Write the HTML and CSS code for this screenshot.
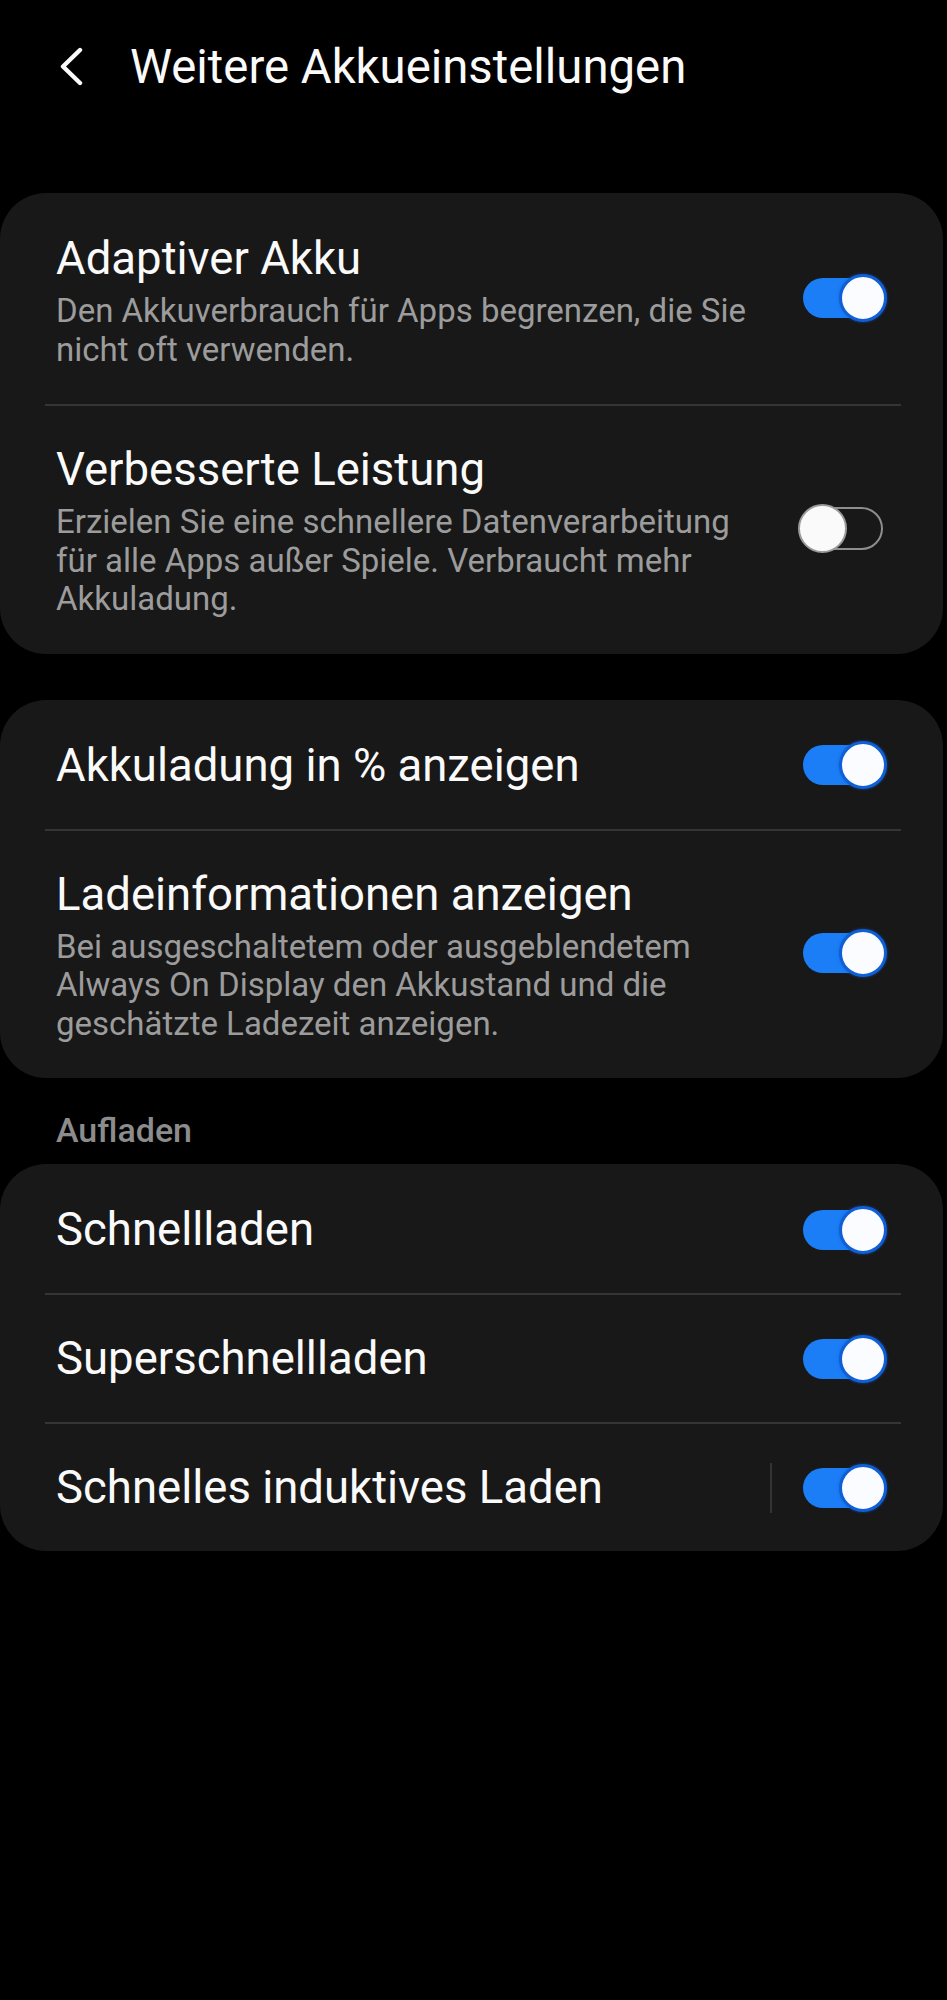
FILE: index.html
```html
<!DOCTYPE html>
<html lang="de">
<head>
<meta charset="utf-8">
<title>Weitere Akkueinstellungen</title>
<link rel="stylesheet" href="styles.css">
</head>
<body>
<header class="topbar">
  <svg class="back" viewBox="0 0 30 40" width="30" height="40" aria-hidden="true">
    <polyline points="24,4 7,20.5 24,37" fill="none" stroke="#fafafa" stroke-width="4.4" stroke-linecap="round" stroke-linejoin="round"/>
  </svg>
  <h1 class="title">Weitere Akkueinstellungen</h1>
</header>

<section class="card first">
  <div class="row multi">
    <div class="text">
      <div class="label">Adaptiver Akku</div>
      <div class="sub">Den Akkuverbrauch für Apps begrenzen, die Sie<br>nicht oft verwenden.</div>
    </div>
    <div class="toggle on"><span class="track"></span><span class="thumb"></span></div>
  </div>
  <div class="row multi">
    <div class="text">
      <div class="label">Verbesserte Leistung</div>
      <div class="sub">Erzielen Sie eine schnellere Datenverarbeitung<br>für alle Apps außer Spiele. Verbraucht mehr<br>Akkuladung.</div>
    </div>
    <div class="toggle off"><span class="track"></span><span class="thumb"></span></div>
  </div>
</section>

<section class="card">
  <div class="row">
    <div class="text">
      <div class="label">Akkuladung in % anzeigen</div>
    </div>
    <div class="toggle on"><span class="track"></span><span class="thumb"></span></div>
  </div>
  <div class="row multi">
    <div class="text">
      <div class="label">Ladeinformationen anzeigen</div>
      <div class="sub">Bei ausgeschaltetem oder ausgeblendetem<br>Always On Display den Akkustand und die<br>geschätzte Ladezeit anzeigen.</div>
    </div>
    <div class="toggle on"><span class="track"></span><span class="thumb"></span></div>
  </div>
</section>

<h2 class="section-title">Aufladen</h2>

<section class="card">
  <div class="row">
    <div class="text">
      <div class="label">Schnellladen</div>
    </div>
    <div class="toggle on"><span class="track"></span><span class="thumb"></span></div>
  </div>
  <div class="row">
    <div class="text">
      <div class="label">Superschnellladen</div>
    </div>
    <div class="toggle on"><span class="track"></span><span class="thumb"></span></div>
  </div>
  <div class="row">
    <div class="text">
      <div class="label">Schnelles induktives Laden</div>
    </div>
    <span class="vsep"></span>
    <div class="toggle on"><span class="track"></span><span class="thumb"></span></div>
  </div>
</section>
</body>
</html>
```

FILE: styles.css
```css
html, body {
  margin: 0;
  padding: 0;
  background: #000;
}

body {
  width: 947px;
  min-height: 2000px;
  font-family: Roboto, "Noto Sans", "Liberation Sans", sans-serif;
  color: #fafafa;
}

.topbar {
  display: flex;
  align-items: center;
  padding: 39px 0 0 56px;
  height: 56px;
}

.back {
  display: block;
  flex: none;
  margin-top: -2px;
}

.title {
  margin: 0 0 0 44px;
  font-size: 47.3px;
  font-weight: 400;
  line-height: 56px;
  white-space: nowrap;
}

.card {
  margin: 46px 4px 0 0;
  padding: 0 42px 0 45px;
  background: #181818;
  border-radius: 46px;
}

.card.first {
  margin-top: 98px;
}

.section-title + .card {
  margin-top: 0;
}

.row {
  display: flex;
  align-items: center;
  padding: 40px 14px 37px 11px;
}

.row.multi {
  padding-bottom: 35px;
}

.row.multi .toggle {
  margin-top: -5px;
}

.row + .row {
  border-top: 2px solid #353535;
  padding-top: 38px;
}

.text {
  flex: 1;
  min-width: 0;
}

.label {
  font-size: 45.5px;
  line-height: 52px;
  white-space: nowrap;
}

.sub {
  margin-top: 7px;
  font-size: 33px;
  line-height: 38.5px;
  color: #9c9c9c;
  white-space: nowrap;
}

.section-title {
  margin: 32px 0 14px 56px;
  font-size: 34px;
  line-height: 40px;
  font-weight: 500;
  color: #8c8c8c;
}

.vsep {
  flex: none;
  width: 2px;
  height: 50px;
  margin-right: 26px;
  background: #343434;
}

.toggle {
  position: relative;
  flex: none;
  width: 89px;
  height: 49px;
}

.toggle .track,
.toggle .thumb {
  position: absolute;
  box-sizing: border-box;
  border-radius: 30px;
}

.toggle.on .track {
  left: 5px;
  right: 10px;
  top: 4px;
  height: 40px;
  background: #1b7ef6;
}

.toggle.on .thumb {
  right: 0;
  top: 0;
  width: 48px;
  height: 48px;
  background: #fafcff;
  border: 3px solid #0f5fd6;
  box-shadow: 0 0 3px rgba(20, 90, 210, 0.7);
}

.toggle.off .track {
  left: 4px;
  right: 4px;
  top: 3px;
  height: 43px;
  border: 2.5px solid #8e8e8e;
}

.toggle.off .thumb {
  left: 0;
  top: 0;
  width: 49px;
  height: 49px;
  background: #fafafa;
  border: 2px solid #9a9a9a;
}
```
